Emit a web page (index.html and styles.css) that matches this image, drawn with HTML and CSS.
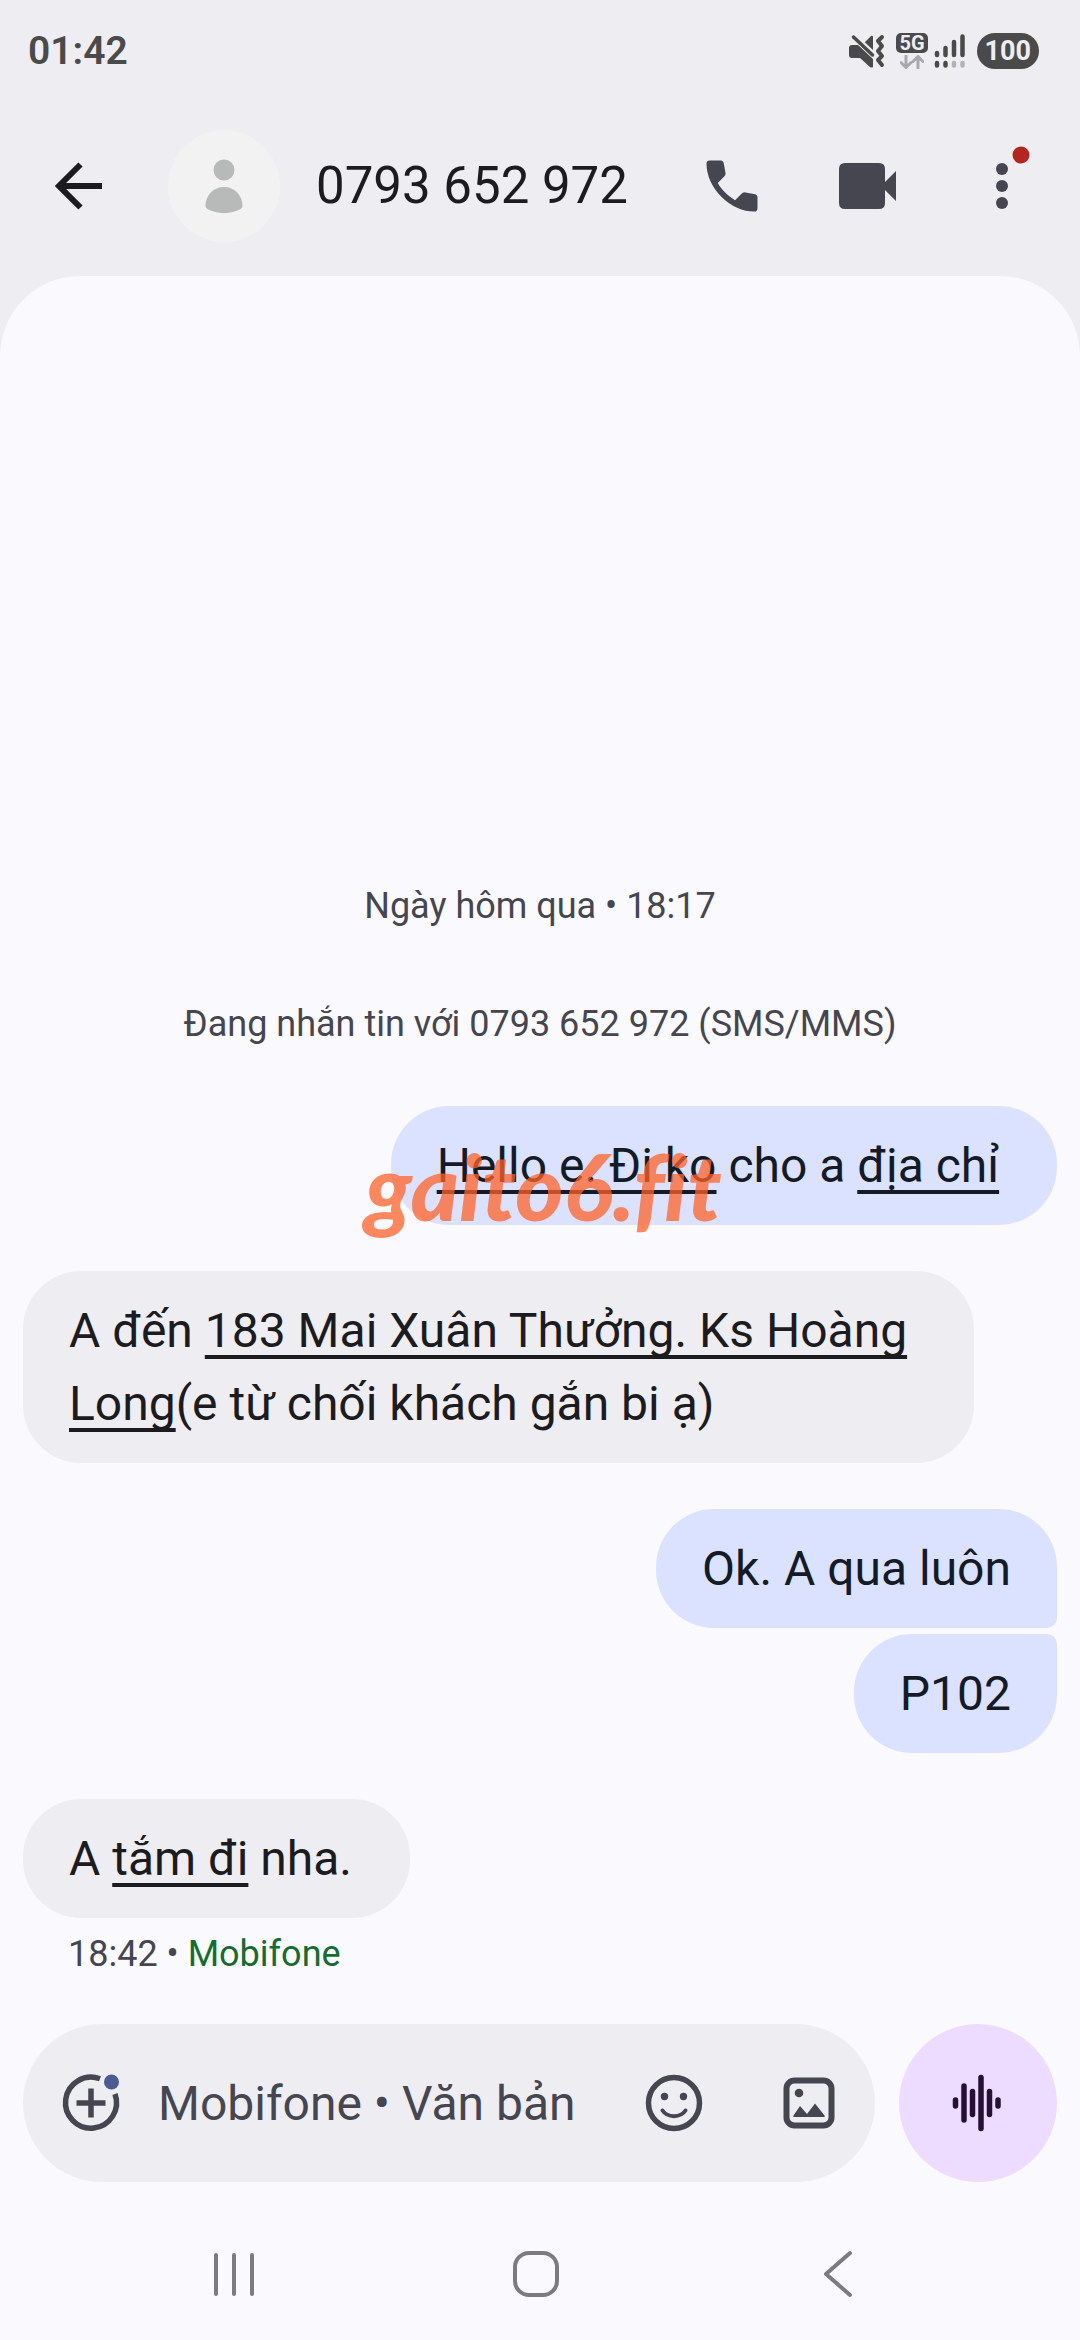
FILE: index.html
```html
<!DOCTYPE html>
<html lang="vi">
<head>
<meta charset="utf-8">
<meta name="viewport" content="width=device-width, initial-scale=1">
<title>0793 652 972</title>
<link rel="stylesheet" href="styles.css">
</head>
<body>
<div class="screen">
  <div class="status">
    <time class="clock">01:42</time>
    <div class="indicators">
      <svg class="mute" viewBox="0 0 36 34" width="36" height="34" aria-hidden="true">
        <path d="M3 11h6l15 14v8q-1 1-3 0L11 24H3q-3 0-3-3v-7q0-3 3-3zM15 9l7-7q2-1 2 1v14z" fill="#4a4a4a"/>
        <path d="M6 1l19 18" stroke="#eeedf2" stroke-width="3"/>
        <path d="M4.500 3l19 18" stroke="#4a4a4a" stroke-width="3.500" stroke-linecap="round"/>
        <path d="M33 3l-4 4 4 5-4 5 4 5-4 4 4 5" fill="none" stroke="#4a4a4a" stroke-width="4" stroke-linecap="round" stroke-linejoin="round"/>
      </svg>
      <div class="network">
        <span class="network-type">5G</span>
        <svg viewBox="0 0 24 14" width="24" height="14" aria-hidden="true">
          <path d="M6 1v11M1 7.500l5 5 5-5M18 13V2M13 6.500l5-5 5 5" fill="none" stroke="#a9a9ad" stroke-width="3" stroke-linecap="round"/>
        </svg>
      </div>
      <svg class="signal" viewBox="0 0 32 34" width="32" height="34" aria-hidden="true">
        <g stroke="#4a4a4a" stroke-width="4.500" stroke-linecap="round">
          <path d="M3 19v2M11.500 14v7M20 8v13M28.500 2.500v18.500M3 29v2.500M11.500 29v2.500"/>
          <path d="M20 29v2.500M28.500 29v2.500" stroke="#b2b2b6"/>
        </g>
      </svg>
      <span class="battery">100</span>
    </div>
  </div>

  <header class="appbar">
    <button class="icon-button" type="button" aria-label="Quay lại">
      <svg viewBox="0 0 68 68" width="68" height="68"><path d="M58 34H16M36.500 12.500L15 34l21.500 21.500" fill="none" stroke="#1b1b20" stroke-width="6"/></svg>
    </button>
    <svg class="avatar" viewBox="0 0 112 112" width="112" height="112" aria-hidden="true">
      <circle cx="56" cy="56" r="56" fill="#f2f2f2"/>
      <circle cx="56" cy="40" r="10.500" fill="#b8bab9"/>
      <path d="M37.500 76c0-11 8-19 18.500-19s18.500 8 18.500 19q0 2-2 3c-10 5.500-23 5.500-33 0q-2-1-2-3z" fill="#b8bab9"/>
    </svg>
    <h1 class="title">0793 652 972</h1>
    <div class="actions">
      <button class="icon-button" type="button" aria-label="Gọi">
        <svg viewBox="0 0 24 24" width="68" height="68"><path d="M19.950 21q-3.125 0-6.175-1.362t-5.550-3.863q-2.500-2.500-3.862-5.550T3 4.050q0-.45.3-.75t.75-.3H8.100q.35 0 .625.238t.325.562l.65 3.500q.05.4-.025.675T9.400 8.450L6.975 10.900q.5.925 1.187 1.787t1.513 1.663q.775.775 1.625 1.438T13.100 17l2.350-2.350q.225-.225.588-.337t.712-.063l3.450.7q.35.1.575.363T21 15.900v4.050q0 .45-.3.750t-.75.300z" fill="#45464f"/></svg>
      </button>
      <button class="icon-button" type="button" aria-label="Gọi video">
        <svg viewBox="0 0 68 68" width="68" height="68"><path d="M12 11h34q6 0 6 6v13l11-11v30L52 38v13q0 6-6 6H12q-6 0-6-6V17q0-6 6-6z" fill="#45464f"/></svg>
      </button>
      <button class="icon-button" type="button" aria-label="Tuỳ chọn khác">
        <svg viewBox="0 0 68 68" width="68" height="68"><g fill="#45464f"><circle cx="34" cy="17" r="6"/><circle cx="34" cy="34" r="6"/><circle cx="34" cy="51" r="6"/></g><circle cx="53" cy="3" r="8.500" fill="#b3261e"/></svg>
      </button>
    </div>
  </header>

  <main class="chat">
    <p class="notice">Ngày hôm qua • 18:17</p>
    <p class="notice">Đang nhắn tin với 0793 652 972 (SMS/MMS)</p>
    <div class="group sent">
      <p class="bubble"><a href="#">Hello e. Đi ko</a> cho a <a href="#">địa chỉ</a>&nbsp;</p>
      <span class="watermark">gaito6.fit</span>
    </div>
    <div class="group">
      <p class="bubble">A đến <a href="#">183 Mai Xuân Thưởng. Ks Hoàng Long</a>(e từ chối khách gắn bi ạ)</p>
    </div>
    <div class="group sent">
      <p class="bubble first">Ok. A qua luôn</p>
      <p class="bubble last">P102</p>
    </div>
    <div class="group">
      <p class="bubble">A <a href="#">tắm đi</a> nha.&nbsp;</p>
    </div>
    <p class="meta">18:42 • <span class="carrier">Mobifone</span></p>
  </main>

  <form class="composer">
    <div class="field">
      <button class="icon-button" type="button" aria-label="Thêm">
        <svg viewBox="0 0 68 68" width="68" height="68">
          <path d="M43 9.800A25.500 25.500 0 1 0 58 25M34 19.500v29M19.500 34h29" fill="none" stroke="#45464f" stroke-width="5.500"/>
          <circle cx="54.500" cy="13" r="7.500" fill="#4a5c92"/>
        </svg>
      </button>
      <input class="message" type="text" aria-label="Tin nhắn" placeholder="Mobifone • Văn bản">
      <button class="icon-button" type="button" aria-label="Biểu tượng cảm xúc">
        <svg viewBox="0 0 68 68" width="68" height="68">
          <circle cx="34" cy="34" r="25.500" fill="none" stroke="#45464f" stroke-width="5.500"/>
          <circle cx="24.500" cy="27.500" r="3.700" fill="#45464f"/><circle cx="43.500" cy="27.500" r="3.700" fill="#45464f"/>
          <path d="M22.500 41.500c5 7.500 18 7.500 23 0" fill="none" stroke="#45464f" stroke-width="4" stroke-linecap="round"/>
        </svg>
      </button>
      <button class="icon-button" type="button" aria-label="Thư viện ảnh">
        <svg viewBox="0 0 68 68" width="68" height="68">
          <rect x="11.500" y="11.500" width="45" height="45" rx="8" fill="none" stroke="#45464f" stroke-width="6"/>
          <circle cx="24" cy="24" r="4.300" fill="#45464f"/>
          <path d="M19 48q-1.500 0-.5-1.500l6.500-9.500 7 8 8-10.500L49.500 46.500q1 1.500-.5 1.500z" fill="#45464f"/>
        </svg>
      </button>
    </div>
    <button class="voice" type="button" aria-label="Ghi âm">
      <svg viewBox="0 0 68 68" width="68" height="68">
        <path d="M11.500 31v6M20 17v34M28.500 22.500v23M37 8.500v51M45.500 22.500v23M54 31v6" stroke="#271036" stroke-width="5.500" stroke-linecap="round"/>
      </svg>
    </button>
  </form>

  <nav class="navbar">
    <button class="icon-button" type="button" aria-label="Gần đây">
      <svg viewBox="0 0 68 68" width="68" height="68"><path d="M16 15v39M34 15v39M52 15v39" stroke="#7c7c80" stroke-width="4" stroke-linecap="round"/></svg>
    </button>
    <button class="icon-button" type="button" aria-label="Trang chủ">
      <svg viewBox="0 0 68 68" width="68" height="68"><rect x="13" y="13" width="42" height="42" rx="14" fill="none" stroke="#7c7c80" stroke-width="4"/></svg>
    </button>
    <button class="icon-button" type="button" aria-label="Quay lại">
      <svg viewBox="0 0 68 68" width="68" height="68"><path d="M46 13L22 34l24 21" fill="none" stroke="#7c7c80" stroke-width="4" stroke-linecap="round" stroke-linejoin="round"/></svg>
    </button>
  </nav>
</div>
</body>
</html>
```
FILE: styles.css
```css
* { box-sizing: border-box; }

body {
  margin: 0;
  background: #eeedf2;
  color: #1b1b20;
  font-family: Roboto, "Noto Sans", sans-serif;
}

h1, p { margin: 0; }

button {
  border: 0;
  padding: 0;
  background: none;
  font: inherit;
}

svg { display: block; flex: none; }

.screen {
  display: flex;
  flex-direction: column;
  min-height: 100vh;
}

.status {
  display: flex;
  align-items: center;
  justify-content: space-between;
  height: 102px;
  padding: 0 41px 0 28px;
}

.clock {
  color: #4a4a4a;
  font-size: 39px;
  font-weight: 600;
}

.indicators {
  display: flex;
  align-items: center;
  gap: 11px;
}

.network {
  display: flex;
  flex-direction: column;
  align-items: center;
  gap: 2px;
}

.network-type {
  padding: 0 3px;
  border-radius: 5px;
  background: #4a4a4a;
  color: #eeedf2;
  font-size: 20px;
  font-weight: 700;
  line-height: 20px;
}

.signal { margin-left: -5px; }

.battery {
  padding: 0 8px;
  border-radius: 18px;
  background: #4a4a4a;
  color: #eeedf2;
  font-size: 27px;
  font-weight: 700;
  line-height: 36px;
}

.appbar {
  display: flex;
  align-items: center;
  height: 174px;
  padding: 0 44px 6px;
}

.avatar { margin: 0 36px 0 56px; }

.title {
  flex: 1;
  font-size: 51px;
  font-weight: 400;
  line-height: 72px;
  white-space: nowrap;
}

.actions {
  display: flex;
  gap: 67px;
}

.actions svg { overflow: visible; }

.chat {
  flex: 1;
  display: flex;
  flex-direction: column;
  justify-content: flex-end;
  padding: 80px 23px 0;
  border-radius: 80px 80px 0 0;
  background: #faf9fe;
}

.notice {
  margin-bottom: 66px;
  color: #45464f;
  font-size: 36px;
  line-height: 52px;
  text-align: center;
}

.notice + .notice { margin-bottom: 56px; }

.group {
  position: relative;
  display: flex;
  flex-direction: column;
  align-items: flex-start;
  gap: 6px;
  margin-bottom: 46px;
}

.sent { align-items: flex-end; }

.bubble {
  max-width: 92%;
  padding: 23px 46px;
  border-radius: 58px;
  background: #eeedf2;
  font-size: 48px;
  line-height: 73px;
}

.sent .bubble {
  background: #dae2ff;
  color: #151b26;
}

.bubble.first { border-bottom-right-radius: 10px; }

.bubble.last { border-top-right-radius: 10px; }

.bubble a {
  color: inherit;
  text-decoration: underline;
  text-decoration-skip-ink: none;
  text-decoration-thickness: 4px;
  text-underline-offset: 8px;
}

.watermark {
  position: absolute;
  top: 30px;
  left: 342px;
  color: rgba(255, 98, 40, 0.75);
  font-family: Lato, sans-serif;
  font-size: 92px;
  font-style: italic;
  font-weight: 900;
  font-variant-ligatures: none;
  line-height: 100px;
}

.meta {
  margin: -36px 0 44px 45px;
  color: #45464f;
  font-size: 36px;
  line-height: 52px;
}

.carrier { color: #146c2e; }

.composer {
  display: flex;
  gap: 24px;
  padding: 0 23px 26px;
  background: #faf9fe;
}

.field {
  flex: 1;
  display: flex;
  align-items: center;
  min-width: 0;
  height: 158px;
  padding: 0 32px 0 34px;
  border-radius: 79px;
  background: #eeedf2;
}

.message {
  flex: 1;
  min-width: 0;
  margin: 0 48px 0 33px;
  padding: 0;
  border: 0;
  outline: 0;
  background: none;
  color: #45464f;
  font: inherit;
  font-size: 48px;
  line-height: 73px;
}

.message::placeholder {
  color: #45464f;
  opacity: 1;
}

.message + .icon-button { margin-right: 67px; }

.voice {
  display: grid;
  place-items: center;
  width: 158px;
  height: 158px;
  border-radius: 50%;
  background: #eddcff;
}

.navbar {
  display: flex;
  align-items: center;
  justify-content: space-between;
  height: 132px;
  padding: 0 208px 0 200px;
  background: #faf9fe;
}
```
